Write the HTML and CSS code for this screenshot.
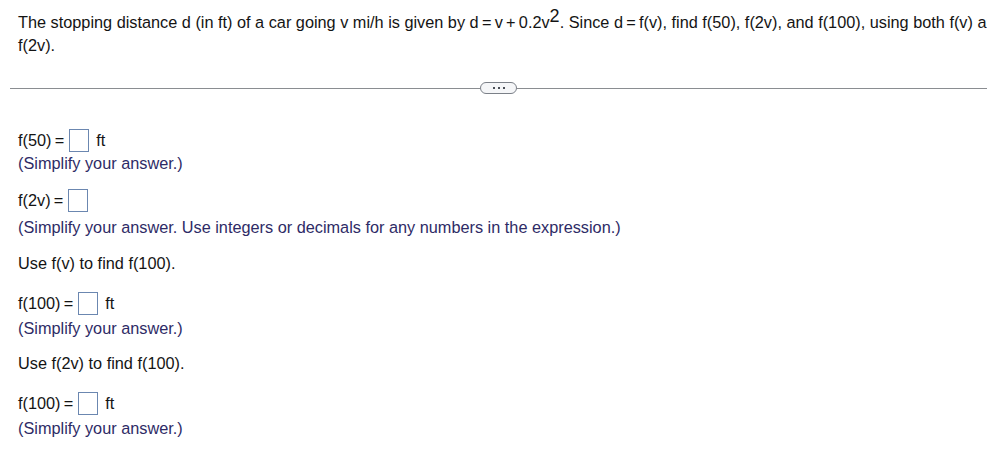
FILE: index.html
```html
<!DOCTYPE html>
<html>
<head>
<meta charset="utf-8">
<link rel="stylesheet" href="styles.css">
</head>
<body>
<div class="page">
  <p class="question">The stopping distance d (in ft) of a car going v mi/h is given by d&#8201;=&#8201;v&#8201;+&#8201;0.2v<sup>2</sup>. Since d&#8201;=&#8201;f(v), find f(50), f(2v), and f(100), using both f(v) and f(2v).</p>
  <div class="divider">
    <span class="rule"></span>
    <span class="pill"><span class="dot"></span><span class="dot"></span><span class="dot"></span></span>
    <span class="rule"></span>
  </div>
  <div class="answers">
    <div class="part p1">
      <div class="row"><span class="lbl">f(50)&#8201;=</span><span class="box"></span><span class="unit">ft</span></div>
      <div class="hint">(Simplify your answer.)</div>
    </div>
    <div class="part p2">
      <div class="row"><span class="lbl">f(2v)&#8201;=</span><span class="box"></span></div>
      <div class="hint">(Simplify your answer. Use integers or decimals for any numbers in the expression.)</div>
    </div>
    <p class="instr i1">Use f(v) to find f(100).</p>
    <div class="part p3">
      <div class="row"><span class="lbl">f(100)&#8201;=</span><span class="box"></span><span class="unit">ft</span></div>
      <div class="hint">(Simplify your answer.)</div>
    </div>
    <p class="instr i2">Use f(2v) to find f(100).</p>
    <div class="part p4">
      <div class="row"><span class="lbl">f(100)&#8201;=</span><span class="box"></span><span class="unit">ft</span></div>
      <div class="hint">(Simplify your answer.)</div>
    </div>
  </div>
</div>
</body>
</html>
```
FILE: styles.css
```css
html, body {
  margin: 0;
  padding: 0;
  background: #ffffff;
}
body {
  font-family: Arial, "Liberation Sans", sans-serif;
  font-size: 16.3px;
  color: #141414;
  width: 987px;
  height: 466px;
  overflow: hidden;
}
.page {
  padding: 0 0 0 18px;
}
.question {
  margin: 0;
  padding-top: 11px;
  line-height: 23px;
  width: 1000px;
}
.question sup {
  font-size: 18px;
  line-height: 0;
  vertical-align: 6px;
}
.divider {
  display: flex;
  align-items: center;
  margin: 24px 0 0 -8px;
  height: 14px;
}
.rule {
  flex: 1;
  height: 1px;
  background: #8a8d91;
}
.pill {
  width: 35px;
  height: 10px;
  border: 1px solid #7b8088;
  border-radius: 6px;
  background: #f5f6f8;
  display: flex;
  align-items: center;
  justify-content: center;
  gap: 3px;
}
.dot {
  width: 2px;
  height: 2px;
  background: #4a4f57;
}
.answers {
  padding-top: 33px;
}
.row {
  display: flex;
  align-items: center;
  height: 24px;
  line-height: 24px;
}
.lbl {
  margin-right: 5px;
}
.box {
  width: 18px;
  height: 21px;
  border: 1px solid #6b87b0;
  background: #ffffff;
  margin-right: 7px;
}
.hint {
  color: #2e2b66;
  line-height: 22px;
}
.part.p2 {
  margin-top: 14px;
}
.part.p2 .hint {
  margin-top: 4px;
}
.instr {
  margin: 0;
  line-height: 22px;
}
.instr.i1 {
  margin-top: 14px;
}
.part.p3 {
  margin-top: 17px;
}
.part.p3 .hint,
.part.p4 .hint {
  margin-top: 2px;
}
.instr.i2 {
  margin-top: 13px;
}
.part.p4 {
  margin-top: 17px;
}
```
